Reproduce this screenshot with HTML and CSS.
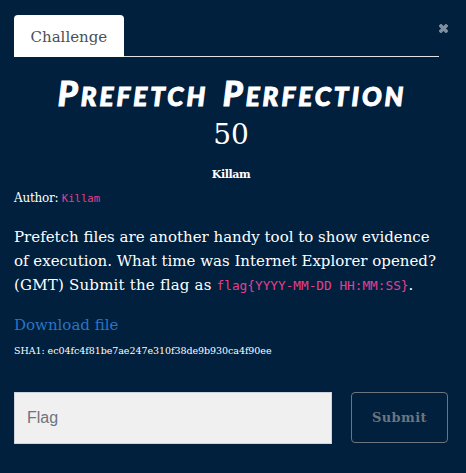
FILE: index.html
```html
<!DOCTYPE html>
<html lang="en">
<head>
<meta charset="utf-8">
<title>Challenge</title>
<link rel="stylesheet" href="styles.css">
</head>
<body>
<main class="modal">
  <header class="top">
    <nav class="tabs"><a class="tab">Challenge</a></nav>
    <button class="close" aria-label="Close"><svg width="9" height="9" viewBox="0 0 9 9"><path d="M2 2l5 5M7 2l-5 5"/></svg></button>
  </header>
  <h2 class="title"><span class="cap">P</span>refetch <span class="cap">P</span>erfection</h2>
  <h3 class="points">50</h3>
  <div class="tag">Killam</div>
  <div class="author">Author: <code>Killam</code></div>
  <p class="desc"><span class="line">Prefetch files are another handy tool to show evidence</span><span class="line">of execution. What time was Internet Explorer opened?</span><span class="line wide">(GMT) Submit the flag as <code>flag{YYYY-MM-DD HH:MM:SS}</code>.</span></p>
  <a class="download">Download file</a>
  <div class="sha">SHA1: ec04fc4f81be7ae247e310f38de9b930ca4f90ee</div>
  <form class="row">
    <input class="flag" type="text" placeholder="Flag">
    <button class="submit" type="button">Submit</button>
  </form>
</main>
</body>
</html>
```
FILE: styles.css
```css
* { box-sizing: border-box; }
body {
  margin: 0;
  background: #00203d;
  color: #fff;
  font: 15px/24px "DejaVu Serif", serif;
  white-space: nowrap;
}
.modal { height: 473px; padding: 15px 18px 0 14px; overflow: hidden; }
.top { display: flex; height: 42px; }
.tabs { width: 425px; border-bottom: 1px solid #dee2e6; }
.tab {
  display: block;
  width: 110px;
  height: 42px;
  padding: 10px 0 0 16.5px;
  border-radius: 4px 4px 0 0;
  background: #fff;
  color: #495057;
  line-height: 24px;
}
.close { margin: 9px 0 0; padding: 0; width: 9px; height: 9px; border: 0; background: none; }
.close svg { display: block; }
.close path { stroke: #7f8f9e; stroke-width: 3.5; stroke-linecap: square; }
.title {
  margin: 17px 0 0;
  height: 38px;
  font: italic 900 26px/38px Lato, sans-serif;
  text-transform: uppercase;
  text-align: center;
  letter-spacing: 3px;
  word-spacing: 6px;
  text-indent: 2px;
  -webkit-text-stroke: 1px #fff;
}
.cap { font-size: 34px; }
.points { margin: 5px 0 0; height: 36px; font-size: 28px; font-weight: 400; line-height: 36px; text-align: center; }
.tag { margin-top: 13px; height: 18px; font-size: 11px; font-weight: 700; line-height: 18px; text-align: center; letter-spacing: -0.4px; }
.author { margin-top: 5px; height: 18px; font-size: 12px; line-height: 18px; letter-spacing: -0.25px; }
code { color: #e83e8c; font-family: "DejaVu Sans Mono", monospace; font-size: 12.75px; letter-spacing: 0; word-spacing: 0; }
.author code { font-size: 10.6px; }
.desc { margin: 18px 0 0; }
.line { display: block; height: 24px; }
.wide { letter-spacing: 0.2px; }
.download { display: block; margin-top: 16px; color: #2b74c4; }
.sha { margin-top: 5px; height: 18px; font-size: 9.5px; line-height: 18px; letter-spacing: -0.05px; }
.row { display: flex; align-items: flex-start; gap: 19px; margin: 32px 0 0; }
.flag {
  width: 318px;
  height: 52px;
  padding: 0 12px;
  border: 1px solid #ced4da;
  border-radius: 0;
  background: #f0f0f0;
  font: 16px "Liberation Sans", sans-serif;
}
.flag::placeholder { color: #6c757d; opacity: 1; }
.submit {
  width: 97px;
  height: 51px;
  padding: 0;
  border: 1px solid #6c757d;
  border-radius: 4px;
  background: none;
  color: #6c757d;
  font: bold 13px "DejaVu Serif", serif;
  letter-spacing: 0.4px;
}
```
